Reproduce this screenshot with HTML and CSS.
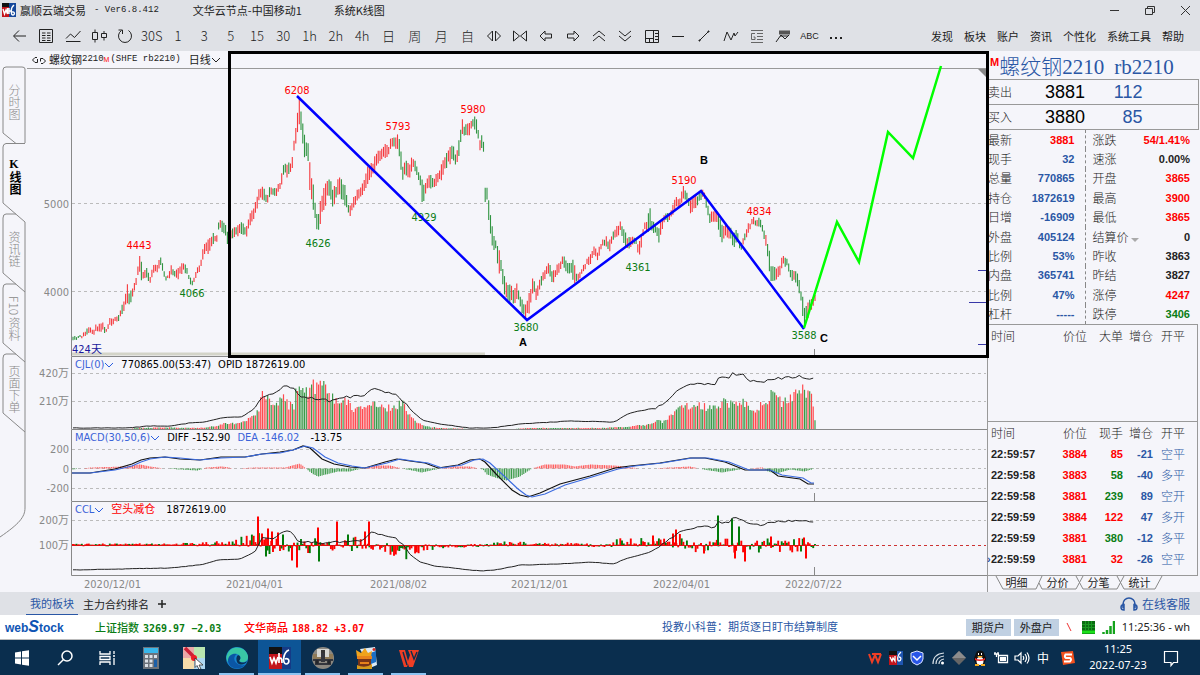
FILE: index.html
```html
<!DOCTYPE html>
<html lang="zh-CN">
<head>
<meta charset="utf-8">
<title>赢顺云端交易</title>
<link rel="stylesheet" href="styles.css">
</head>
<body>
<div class="app">
  <header class="titlebar">
    <svg class="app-logo" viewBox="0 0 14 14"><rect width="7" height="14" fill="#c3141b"/><rect width="7" height="4" fill="#111"/><rect x="7" width="7" height="14" fill="#15479a"/><path d="M1 6l1.500 5L4 7l1.500 4V5M7 5v6M7 8h2M12 2C8 5 9 12 11 12s2-4-1-3" fill="none" stroke="#fff" stroke-width="1.400"/></svg>
    <span class="app-name">赢顺云端交易</span>
    <span class="app-version">- Ver6.8.412</span>
    <span class="app-node">文华云节点-中国移动1</span>
    <span class="app-view">系统K线图</span>
    <div class="window-buttons">
      <button aria-label="最小化"><svg viewBox="0 0 12 12"><path d="M1 6.500h9"/></svg></button>
      <button aria-label="还原"><svg viewBox="0 0 12 12"><path d="M1.500 4.500h7v6h-7zM3.500 4V2.500h7v6H9"/></svg></button>
      <button aria-label="关闭"><svg viewBox="0 0 12 12"><path d="M2 2l9 9M11 2l-9 9"/></svg></button>
    </div>
  </header>

  <nav class="toolbar">
    <div class="tools">
      <button aria-label="返回"><svg viewBox="0 0 16 16"><path d="M14 8H2M7 2.500L1.500 8 7 13.500"/></svg></button>
      <button aria-label="报价"><svg viewBox="0 0 16 16"><path d="M1.500 1.500h13v13h-13zM4 5h3.500M9 5h3.500M4 7.500h3.500M9 7.500h3.500M4 10h3.500M9 10h3.500M4 12.500h3.500M9 12.500h3.500"/></svg></button>
      <button aria-label="分时"><svg viewBox="0 0 16 16"><path d="M1 10.500L5.500 6l4 3.500L15.500 3M1 13.500h14.500"/></svg></button>
      <button aria-label="K线"><svg viewBox="0 0 16 16"><path d="M1.500 4.500h5v7h-5zM4 1.500v3M4 11.500v3M10.500 5.500h5v4h-5zM13 3v2.500M13 9.500v3"/></svg></button>
      <button aria-label="刷新"><svg viewBox="0 0 16 16"><path d="M4.500 2.500A6.500 6.500 0 1 0 11.500 2.500M1.500 2h4v4"/></svg></button>
      <button>30S</button><button>1</button><button>3</button><button>5</button><button>15</button><button>30</button><button>1h</button><button>2h</button><button>4h</button><button>日</button><button>周</button><button>月</button><button>自</button>
      <button aria-label="展开"><svg viewBox="0 0 16 16"><path d="M6.500 3v10L1.500 8zM9.500 3v10l5-5z"/></svg></button>
      <button aria-label="收缩"><svg viewBox="0 0 16 16"><path d="M1.500 3v10l6-5zM14.500 3v10l-6-5z"/></svg></button>
      <button aria-label="左移"><svg viewBox="0 0 16 16"><path d="M7 3L2 8l5 5v-3h6.500V6H7z"/></svg></button>
      <button aria-label="右移"><svg viewBox="0 0 16 16"><path d="M9 3l5 5-5 5v-3H2.500V6H9z"/></svg></button>
      <button aria-label="放大"><svg viewBox="0 0 16 16"><path d="M2 8l6-5 6 5M2 13l6-5 6 5"/></svg></button>
      <button aria-label="缩小"><svg viewBox="0 0 16 16"><path d="M2 3l6 5 6-5M2 8l6 5 6-5"/></svg></button>
      <button aria-label="版面"><svg viewBox="0 0 16 16"><path d="M1.500 2.500h13v12h-13zM9.500 2.500v12M1.500 10.500h8M5.500 10.500v4M11 5.500h3M11 8.500h3M11 11.500h3"/></svg></button>
      <button aria-label="水平线"><svg viewBox="0 0 16 16"><path d="M2 8.500h12"/></svg></button>
      <button aria-label="线段"><svg viewBox="0 0 16 16"><path d="M3 13l10-10"/><path d="M3 12h1v1H3zM12 3h1v1h-1z"/></svg></button>
      <button aria-label="波浪"><svg viewBox="0 0 16 16"><path d="M1 13l3-9 4 8 3-7 1 3 3-4"/></svg></button>
      <button aria-label="斐波那契"><svg viewBox="0 0 16 16"><path d="M2 2.500h12M8 5.500h6M8 8.500h6M8 11.500h6M2 14.500h12M6 5.500H2.500v6H6V9H4.500" stroke="#666"/></svg></button>
      <button aria-label="通道"><svg viewBox="0 0 16 16"><path d="M4 3.500h11M4 5.500h11" stroke="#555" stroke-width="2"/><path d="M1 14l5-7 4 4 4-4M5 8h8"/></svg></button>
      <button class="abc">ABC</button>
      <button aria-label="更多"><svg viewBox="0 0 16 16"><path d="M2 10h2M7 10h2M12 10h2" stroke-width="2"/></svg></button>
    </div>
    <div class="menu"><button>发现</button><button>板块</button><button>账户</button><button>资讯</button><button>个性化</button><button>系统工具</button><button>帮助</button></div>
  </nav>

  <main class="workspace">
    <nav class="side-tabs">
      <svg class="side-outline" viewBox="0 0 27 541"><path d="M25 92V18Q25 16 22 16H6Q3 16 3 19V82L16 92.500H25M16 92.500H6Q3 93 3 96V152L25 171V241M16 163H6Q3 163 3 167V222L25 241V311M16 233H6Q3 233 3 237V292L25 311V381M16 303H6Q3 303 3 307V362L25 381V457C25 466 19 473 0 486"/></svg>
      <button>分时图</button>
      <button class="active">K线图</button>
      <button>资讯链</button>
      <button>F10 资料</button>
      <button>页面下单</button>
    </nav>

    <section class="charts">
      <div class="chart-head">
        <svg viewBox="0 0 16 10"><path d="M6 2.500H4L1.500 5 4 7.500h2.500V4M9.500 6.500v-3H12L14.500 6 12 8.500h-2"/></svg>
        <span>螺纹钢</span><span class="code">2210</span><sup>M</sup><span class="code market">(SHFE rb2210)</span>
        <button class="period">日线<svg viewBox="0 0 10 8"><path d="M1 2l4 4 4-4"/></svg></button>
      </div>
      <svg id="price" class="plot price" viewBox="27 68 960 289"></svg>
      <div class="pane">
        <div class="pane-head"><button>CJL(0)<svg viewBox="0 0 10 8"><path d="M1 2l4 4 4-4"/></svg></button><span>770865.00(53:47)</span><span>OPID 1872619.00</span></div>
        <svg id="volume" class="plot" viewBox="27 357 960 73"></svg>
      </div>
      <div class="pane">
        <div class="pane-head"><button>MACD(30,50,6)<svg viewBox="0 0 10 8"><path d="M1 2l4 4 4-4"/></svg></button><span>DIFF -152.90</span><span class="dea">DEA -146.02</span><span class="hist">-13.75</span></div>
        <svg id="macd" class="plot" viewBox="27 430 960 72"></svg>
      </div>
      <div class="pane">
        <div class="pane-head"><button>CCL<svg viewBox="0 0 10 8"><path d="M1 2l4 4 4-4"/></svg></button><span class="signal">空头减仓</span><span class="interest">1872619.00</span></div>
        <svg id="interest" class="plot" viewBox="27 502 960 74"></svg>
      </div>
      <svg id="dates" class="plot" viewBox="27 576 960 16"></svg>
    </section>

    <aside class="quote">
      <h1><sup>M</sup><span>螺纹钢2210</span><span>rb2210</span></h1>
      <table class="book">
        <tr><th>卖出</th><td>3881</td><td class="blue">112</td></tr>
        <tr><th>买入</th><td>3880</td><td class="blue">85</td></tr>
      </table>
      <table class="stats">
        <tr><th>最新</th><td class="red">3881</td><th>涨跌</th><td class="red">54/1.41%</td></tr>
        <tr><th>现手</th><td class="blue">32</td><th>速涨</th><td>0.00%</td></tr>
        <tr><th>总量</th><td class="blue">770865</td><th>开盘</th><td class="red">3865</td></tr>
        <tr><th>持仓</th><td class="blue">1872619</td><th>最高</th><td class="red">3900</td></tr>
        <tr><th>日增</th><td class="blue">-16909</td><th>最低</th><td class="red">3865</td></tr>
        <tr><th>外盘</th><td class="blue">405124</td><th>结算价<i class="caret"></i></th><td>0</td></tr>
        <tr><th>比例</th><td class="blue">53%</td><th>昨收</th><td>3863</td></tr>
        <tr><th>内盘</th><td class="blue">365741</td><th>昨结</th><td>3827</td></tr>
        <tr><th>比例</th><td class="blue">47%</td><th>涨停</th><td class="red">4247</td></tr>
        <tr><th>杠杆</th><td class="blue">-----</td><th>跌停</th><td class="green">3406</td></tr>
      </table>
      <div class="big-orders">
        <table class="ticks"><tr><th>时间</th><th>价位</th><th>大单</th><th>增仓</th><th>开平</th></tr></table>
      </div>
      <div class="trades">
        <table class="ticks">
          <tr><th>时间</th><th>价位</th><th>现手</th><th>增仓</th><th>开平</th></tr>
          <tr><td>22:59:57</td><td class="red">3884</td><td class="red">85</td><td class="blue">-21</td><td>空平</td></tr>
          <tr><td>22:59:58</td><td class="red">3883</td><td class="green">58</td><td class="blue">-40</td><td>多平</td></tr>
          <tr><td>22:59:58</td><td class="red">3881</td><td class="green">239</td><td class="blue">89</td><td>空开</td></tr>
          <tr><td>22:59:59</td><td class="red">3884</td><td class="red">122</td><td class="blue">47</td><td>多开</td></tr>
          <tr><td>22:59:59</td><td class="red">3881</td><td class="green">380</td><td class="blue">-12</td><td>多平</td></tr>
          <tr class="latest"><td>22:59:59</td><td class="red">3881</td><td class="red">32</td><td class="blue">-26</td><td>空平</td></tr>
        </table>
      </div>
      <div class="detail-tabs">
        <svg viewBox="0 0 213 16"><path d="M8 0L15 13H48L54 0M51 7L54 13H88L95 0M88 0L95 13H129L136 0M129 0L136 13H167L174 0"/></svg>
        <button>明细</button><button>分价</button><button>分笔</button><button>统计</button>
      </div>
    </aside>
  </main>

  <nav class="sheet-bar">
    <button class="active">我的板块</button><button>主力合约排名</button>
    <button class="add" aria-label="添加"><svg viewBox="0 0 10 10"><path d="M5 1v8M1 5h8"/></svg></button>
    <a class="support" href="#"><svg viewBox="0 0 18 16"><path d="M3 12V8a6 6 0 0 1 12 0v4M4 8.500c-4 0-4 5.500 0 5.500zM14 8.500c4 0 4 5.500 0 5.500z"/></svg>在线客服</a>
  </nav>

  <footer class="ticker">
    <span class="brand">web<b>S</b>tock</span>
    <span class="index green">上证指数<em>3269.97 −2.03</em></span>
    <span class="index red">文华商品<em>188.82 +3.07</em></span>
    <a class="news" href="#">投教小科普：期货逐日盯市结算制度</a>
    <div class="accounts">
      <button>期货户</button><button>外盘户</button>
      <svg class="slash" viewBox="0 0 8 12"><path d="M2 2l4 8" stroke="#e33"/></svg>
      <svg class="meter" viewBox="0 0 13 13"><rect width="13" height="13" fill="#0b6b12"/><path d="M0 11h13" stroke="#1be01b" stroke-width="3"/><path d="M0 3.500h13M0 6.500h13M3.500 0v9M6.500 0v9M9.500 0v9" stroke="#1a9a22" stroke-width="1"/></svg>
      <svg class="meter" viewBox="0 0 13 13"><path d="M1.500 11v2M5 9v4M8.500 5v8M12 0v13" stroke="#14a31c" stroke-width="2.500"/></svg>
      <time>11:25:36 - wh</time>
    </div>
  </footer>

  <div class="taskbar">
    <button aria-label="开始"><svg viewBox="0 0 22 22"><path d="M4 5.500l6-1V10.500H4zM11 4.300l7-1v7.200h-7zM4 11.500h6v6l-6-1zM11 11.500h7v7.200l-7-1z" fill="#fff"/></svg></button>
    <button aria-label="搜索"><svg viewBox="0 0 22 22"><circle cx="13" cy="9" r="5" fill="none" stroke="#fff" stroke-width="1.500"/><path d="M9.500 12.500L4 18" stroke="#fff" stroke-width="1.500"/></svg></button>
    <button aria-label="任务视图"><svg viewBox="0 0 22 22"><path d="M3 4v3h10V4M3 18v-3h10v3M3 9.500h10v3H3zM17 4v3M17 11v7M16 9h2" fill="none" stroke="#fff" stroke-width="1.300"/></svg></button>
    <button aria-label="计算器"><svg viewBox="0 0 22 22"><rect x="3" width="16" height="22" fill="#6c737b"/><rect x="4" y="1" width="14" height="5" fill="#39b7ea"/><g fill="#dce2e8"><path d="M5 8h3v3H5zM9.500 8h3v3h-3zM14 8h3v3h-3zM5 12.500h3v3H5zM9.500 12.500h3v3h-3zM5 17h3v3H5zM9.500 17h3v3h-3z"/></g><path d="M14 12.500h3V20h-3z" fill="#1a5fa8"/></svg></button>
    <button aria-label="截图"><svg viewBox="0 0 22 22"><path d="M0 0h11v11H0z" fill="#eaa8a8"/><path d="M11 0h11v11H11z" fill="#b9e6b0"/><path d="M0 11h11v11H0z" fill="#f5dcaa"/><path d="M11 11h11v11H11z" fill="#aed8f2"/><path d="M2 1l9 9" stroke="#c92238" stroke-width="3.500"/><circle cx="11" cy="11" r="3" fill="#ee1c25"/><path d="M12 11l8 7h-4l2 4-2 .5-2-4-2 2z" fill="#fff" stroke="#333" stroke-width=".8"/></svg></button>
    <button class="open" aria-label="浏览器"><svg viewBox="0 0 22 22"><circle cx="11" cy="11" r="11" fill="#1683cf"/><path d="M1 8C4-2 19-2 22 9c1 7-7 7-9 5 3-3 1-7-3-7C5 7 2 11 2 15 0 12 0 10 1 8z" fill="#39c6a5"/><path d="M2 14c0-6 5-8 9-7-4 2-4 9 3 11 3 1 5 0 6-1-4 6-16 7-18-3z" fill="#0b56a5"/><path d="M12 8c3 1 3 4 1 6 3 3 7 1 8 0-1 4-8 5-10 1-1-3-1-5 1-7z" fill="#0a3054"/></svg></button>
    <button class="open current" aria-label="赢顺"><svg viewBox="0 0 22 22"><path d="M0 0h14v22H0z" fill="#c3141b"/><path d="M0 0h14v7H0z" fill="#111"/><path d="M13 0h9v22h-9z" fill="#153a86"/><path d="M1 10l2 6 2-5 2 5 2-6M10 6v10M10 12q3-3 3 4M20 3c-6 2-7 14-3 14s4-7-1-5" fill="none" stroke="#fff" stroke-width="1.700"/></svg></button>
    <button class="open" aria-label="相册"><svg viewBox="0 0 22 22"><circle cx="11" cy="11" r="11" fill="#8c8880"/><path d="M1 7h20v7H1z" fill="#8f7b58"/><path d="M5 2h12v8H5z" fill="#d6d6d2"/><path d="M1 12h20v2H1zM3 16h16v2H3zM9 6h4v9H9z" fill="#34363d"/><path d="M9 3h4v3H9z" fill="#333"/><circle cx="5" cy="15" r="2" fill="#24262b"/><circle cx="17" cy="15" r="2" fill="#24262b"/></svg></button>
    <button class="open" aria-label="游戏"><svg viewBox="0 0 22 22"><path d="M5 2L20 0l2 18-7 3z" fill="#dceaf7"/><path d="M15 6l6-2v11l-5 2z" fill="#1c6fc4"/><path d="M19 1v3M17.500 2.500h3" stroke="#d72a1c" stroke-width="1.500"/><path d="M1 3l5 3 4-5 3 5 4-2-1 6H2z" fill="#f0a31c"/><path d="M3 10h13v8c-5 5-10 3-13 0z" fill="#7a3417"/><path d="M2 9h15v3H2zM5 15h9v2H5z" fill="#e8821b"/><path d="M2 18q8 4 15-1v5H2z" fill="#d79a1c"/></svg></button>
    <button class="open" aria-label="WPS"><svg viewBox="0 0 22 22"><path d="M1 3h6l3 11 2-6-2-5h11l-6 17h-4l-1-3-1 3H6z" fill="#ef3e25"/><path d="M5 5l4 13M13 4l3 8 3-7" stroke="#0a2e4e" fill="none" stroke-width="1.400"/></svg></button>
    <div class="tray">
      <svg viewBox="0 0 16 16"><path d="M2 4l3 8 3-7 3 7 3-8M5 4h9" fill="none" stroke="#ef3e25" stroke-width="2"/></svg>
      <svg viewBox="0 0 16 16"><path d="M1 1h8v14H1z" fill="#c3141b"/><path d="M1 1h8v4H1z" fill="#111"/><path d="M9 1h6v14H9z" fill="#1f55b0"/><path d="M2 7l2 4 1-3 2 3V6M13 2c-4 3-4 9-2 9s3-4 0-4" fill="none" stroke="#fff" stroke-width="1.300"/></svg>
      <svg viewBox="0 0 16 16"><path d="M8 1l6 2v6q0 4-6 6-6-2-6-6V3z" fill="#2856e8" stroke="#dfe7ff"/><path d="M4 6l4 4 4-4" fill="none" stroke="#fff" stroke-width="1.500"/></svg>
      <svg viewBox="0 0 16 16"><path d="M3 14Q3 4 14 3M6 14q0-7 8-8M9 14q0-4 5-5" fill="none" stroke="#d6dee5" stroke-width="1.200"/><circle cx="12.500" cy="13" r="1.500" fill="#fff"/></svg>
      <svg viewBox="0 0 16 16"><path d="M8 1l7 7-7 7-7-7z" fill="#666"/><path d="M8 1l7 7H1z" fill="#8c8c8c"/></svg>
      <svg viewBox="0 0 16 16"><ellipse cx="8" cy="9" rx="6" ry="6" fill="#111"/><circle cx="8" cy="5" r="4.500" fill="#111"/><ellipse cx="8" cy="11" rx="3.500" ry="4" fill="#fff"/><path d="M3 8q5 3 10 0v2q-5 2-10 0z" fill="#e22"/><path d="M6 4h1M9 4h1" stroke="#fff" stroke-width="2"/><path d="M5 6h6l-3 2zM3 14h4v2H3zM9 14h4v2H9z" fill="#f5a81c"/></svg>
      <svg viewBox="0 0 16 16"><path d="M5.500 5.500h9v7h-9zM1 4h5M2 2v2M5 2v2M3.500 4v3" fill="none" stroke="#fff" stroke-width="1.300"/><path d="M7 7h6v4H7z" fill="#fff"/></svg>
      <svg viewBox="0 0 16 16"><path d="M1 6h3l3-3v10L4 10H1zM9 6q1.500 2 0 4M11 4q3 4 0 8M13 2.500q4 5.500 0 11" fill="none" stroke="#fff" stroke-width="1.200"/></svg>
      <span class="ime">中</span>
      <svg viewBox="0 0 16 16"><path d="M1 2l12-1 2 12-12 2z" fill="#f4511e"/><path d="M12 4.500H5.500Q4 7 6 8h4q2 1 0 3.500H4" fill="none" stroke="#fff" stroke-width="2"/></svg>
    </div>
    <div class="clock"><span>11:25</span><span>2022-07-23</span></div>
    <button class="notice" aria-label="通知"><svg viewBox="0 0 22 22"><path d="M4.500 4.500h13v11h-4l-2.500 3v-3h-6.500z" fill="none" stroke="#fff" stroke-width="1.200"/></svg></button>
  </div>
</div>
<script src="chart.js"></script>
</body>
</html>
```

FILE: styles.css
```css
* { box-sizing: border-box; }
body {
  margin: 0;
  background: #f5f5fa;
  color: #222;
  font: 11px/16px "DejaVu Sans Condensed", "Noto Sans", "Noto Sans CJK SC", sans-serif;
}
button {
  border: 0;
  padding: 0;
  background: none;
  color: inherit;
  font: inherit;
  white-space: nowrap;
}
a { color: inherit; text-decoration: none; }
table { border-collapse: collapse; width: 100%; }
th, td { padding: 0; }
.red { color: #f00; }
.green { color: #0a7d14; }
.blue { color: #2a57a5; }
.app { display: flex; flex-direction: column; min-height: 100vh; }

.titlebar {
  display: flex;
  align-items: center;
  height: 20px;
  background: #dfe1e6;
  font: 11px/20px "Noto Sans CJK SC", sans-serif;
}
.app-logo { width: 14px; height: 14px; margin: 0 4px 0 2px; }
.app-version { margin-left: 8px; font: 9px/20px "Liberation Mono", monospace; white-space: pre; }
.app-node { margin-left: 34px; }
.app-view { margin-left: 32px; }
.window-buttons { display: flex; gap: 23px; margin-left: auto; padding-right: 9px; }
.window-buttons button { display: flex; }
.window-buttons svg { width: 12px; height: 12px; fill: none; stroke: #333; }

.toolbar {
  display: flex;
  align-items: center;
  height: 31px;
  background: #dfe1e6;
}
.tools { display: flex; flex: 1; padding: 0 82px 0 7px; }
.tools button {
  display: flex;
  flex: 1 1 0;
  min-width: 0;
  height: 20px;
  align-items: center;
  justify-content: center;
  font: 300 13px/20px "Noto Sans CJK SC", sans-serif;
}
.tools svg { flex: none; width: 16px; height: 16px; fill: none; stroke: #222; }
.tools .abc { font: 9px/20px "Liberation Sans", sans-serif; }
.menu { display: flex; gap: 11px; padding-right: 16px; }
.menu button { font: 11px/18px "Noto Sans CJK SC", sans-serif; }

.workspace { display: flex; flex: 1; align-items: stretch; }
.side-tabs {
  position: relative;
  display: flex;
  flex: none;
  flex-direction: column;
  width: 27px;
  padding-top: 16px;
}
.side-outline {
  position: absolute;
  top: 0;
  left: 0;
  width: 27px;
  height: 541px;
  fill: none;
  stroke: #888;
}
.side-tabs button {
  position: relative;
  width: 28px;
  height: 70px;
  color: #888;
  font: 300 12px/28px "Noto Sans CJK SC", sans-serif;
  writing-mode: vertical-rl;
}
.side-tabs .active {
  height: 77px;
  color: #000;
  font: 700 12px/28px "Liberation Serif", "Noto Sans CJK SC", serif;
  text-orientation: upright;
}

.charts { flex: 1; min-width: 0; }
.chart-head {
  display: flex;
  align-items: center;
  height: 17px;
  padding-left: 4px;
  font: 11px/17px "Noto Sans CJK SC", sans-serif;
}
.chart-head svg { width: 16px; height: 10px; margin-right: 2px; fill: none; stroke: #222; }
.chart-head sup { color: #f00; font: 7px/8px "Liberation Sans", sans-serif; }
.chart-head .code { font: 9px/17px "Liberation Mono", monospace; }
.chart-head .market { margin-left: 1px; }
.period { display: flex; align-items: center; margin-left: 8px; }
.chart-head .period svg { width: 10px; height: 8px; margin: 0; }
.plot { display: block; width: 100%; height: auto; }
.price { position: relative; z-index: 2; overflow: visible; pointer-events: none; }
.plot text { fill: #888; }
.plot .peak { fill: #f00; text-anchor: middle; }
.plot .trough { fill: #0a7d14; text-anchor: middle; }
.plot .letter { fill: #000; font: bold 11px "Liberation Sans", sans-serif; text-anchor: middle; }
.plot .span { fill: #1a1a9c; }
.pane { position: relative; }
.pane-head {
  position: absolute;
  top: 0;
  left: 48px;
  display: flex;
  gap: 7px;
}
.pane-head button { color: #3b63d8; }
.pane-head span { color: #000; }
.pane-head .dea { color: #3b63d8; }
.pane-head .signal { color: #f00; }
.pane-head .hist, .pane-head .interest { margin-left: 4px; }
.pane-head svg { width: 10px; height: 8px; fill: none; stroke: #2b5fe0; vertical-align: middle; }

.quote {
  display: flex;
  flex: none;
  flex-direction: column;
  width: 213px;
  border-left: 1px solid #999;
}
.quote h1 {
  display: flex;
  gap: 10px;
  height: 28px;
  margin: 0;
  padding-left: 2px;
  color: #2a57a5;
  font: 300 21px/32px "Liberation Serif", "Noto Sans CJK SC", serif;
  white-space: nowrap;
}
.quote h1 sup { margin-right: -10px; color: #f00; font: bold 11px/22px "Liberation Sans", sans-serif; }
.quote table { table-layout: fixed; }
.quote th {
  font: 300 12px/18px "Noto Sans CJK SC", sans-serif;
  text-align: left;
  white-space: nowrap;
}
.quote td { font: bold 11px/18px "Liberation Sans", sans-serif; text-align: right; }
.quote .book, .quote .stats { width: 210px; }
.book tr { height: 25px; border: 1px solid #999; border-left: 0; }
.book th { width: 52px; }
.quote .book td { width: 45px; color: #000; font: 18px/24px "Liberation Sans", sans-serif; }
.quote .book td.blue { width: 113px; padding-right: 55px; color: #2a57a5; }
.stats { height: 194px; }
.stats th:first-child { width: 36px; }
.stats td:nth-child(2) { width: 61px; padding-right: 10px; border-right: 1px dashed #888; }
.stats th:nth-child(3) { width: 55px; padding-left: 7px; }
.stats td:last-child { padding-right: 8px; }
.caret { display: inline-block; margin-left: 2px; border: 4px solid transparent; border-top-color: #aaa; border-bottom: 0; }
.big-orders { height: 97px; border-top: 1px solid #999; border-right: 1px solid #999; margin-right: 2px; }
.trades { flex: 1; border: 1px solid #999; border-width: 1px 1px 1px 0; margin-right: 2px; }
.ticks tr { height: 21px; }
.ticks th, .ticks td { text-align: right; }
.ticks th:first-child, .ticks td:first-child { width: 52px; padding-left: 3px; text-align: left; }
.ticks th:nth-child(2) { width: 47px; }
.ticks th:nth-child(3) { width: 36px; }
.ticks th:nth-child(4) { width: 30px; }
.ticks th:nth-child(5), .ticks td:nth-child(5) { padding-right: 12px; }
.quote .ticks td:nth-child(5) { color: #2a57a5; font: 300 12px/18px "Noto Sans CJK SC", sans-serif; }
.latest td:first-child { position: relative; }
.latest td:first-child::before { content: "›"; position: absolute; left: -1px; color: #2a57a5; }
.detail-tabs { position: relative; display: flex; height: 16px; padding-left: 8px; }
.detail-tabs svg { position: absolute; top: 0; left: 0; width: 213px; height: 16px; fill: none; stroke: #888; }
.detail-tabs button { position: relative; width: 41px; height: 12px; font: 11px/12px "Noto Sans CJK SC", sans-serif; }

.sheet-bar {
  display: flex;
  height: 23px;
  padding: 0 10px 0 26px;
  background: #dfe1e6;
  font: 11px/22px "Noto Sans CJK SC", sans-serif;
}
.sheet-bar button { margin-right: 5px; }
.sheet-bar .active { width: 52px; border-bottom: 1px solid #2a57a5; color: #2a57a5; }
.sheet-bar .add { display: flex; align-items: center; margin-left: 3px; }
.add svg { width: 10px; height: 10px; stroke: #222; stroke-width: 1.5; }
.support { display: flex; align-items: center; gap: 4px; margin-left: auto; color: #2a57a5; font-size: 12px; }
.support svg { width: 18px; height: 16px; fill: none; stroke: #2a57a5; stroke-width: 1.5; }

.ticker {
  display: flex;
  align-items: center;
  height: 25px;
  padding-left: 5px;
  background: #fff;
  border-bottom: 1px solid #bbb;
  font: 11px/24px "Noto Sans CJK SC", sans-serif;
  white-space: nowrap;
}
.brand { width: 90px; color: #0f55b4; font: bold 12px/24px "Liberation Sans", sans-serif; }
.brand b { font-size: 16px; font-style: italic; }
.index { width: 149px; font-weight: 500; }
.index em { margin-left: 4px; font: bold 10px "DejaVu Sans Mono", monospace; }
.news { margin: 0 auto 3px 269px; color: #2a57a5; }
.accounts { display: flex; align-items: center; padding-right: 10px; }
.accounts button { width: 45px; height: 17px; margin-right: 3px; background: #c0d0e2; font: 11px/16px "Noto Sans CJK SC", sans-serif; }
.slash { width: 8px; height: 12px; margin: 0 9px 0 3px; }
.meter { width: 13px; height: 13px; margin-right: 7px; }
.accounts time { font: 11px/24px "Noto Sans", sans-serif; }

.taskbar { display: flex; flex: none; height: 35px; background: #0a2e4e; color: #fff; }
.taskbar > button { display: flex; width: 43px; align-items: center; justify-content: center; background: no-repeat bottom / 35px 2px; }
.taskbar > button svg { width: 22px; height: 22px; }
.taskbar > .open { background-image: linear-gradient(#8cc4f2, #8cc4f2); }
.taskbar > .current { background-color: #0d5596; background-size: 43px 2px; }
.tray { display: flex; gap: 5px; align-items: center; margin-left: auto; }
.tray svg { width: 16px; height: 16px; }
.ime { width: 16px; margin-right: 4px; font: 12px/16px "Noto Sans CJK SC", sans-serif; text-align: center; }
.clock { display: flex; flex-direction: column; width: 84px; padding-top: 1px; font: 11px/16px "Noto Sans", sans-serif; text-align: center; }
.taskbar > .notice { width: 22px; margin-right: 18px; }
```

FILE: chart.js
```js
const RED = '#f5383c', GREEN = '#2f9440';
const FIRST = 73, LAST = 815, DAYS = 424;
const STEP = (LAST - FIRST) / (DAYS - 1);

let seed = 11;
const rand = () => (seed = (seed * 16807) % 2147483647) / 2147483647;
const parse = s => s.trim().split(/\s+/).map(p => p.split(',').map(Number));

// Linear interpolation of column c at position x.
function at(points, x, c = 1) {
  let i = 1;
  while (i < points.length - 1 && points[i][0] < x) i++;
  const a = points[i - 1], b = points[i];
  const t = Math.max(0, Math.min(1, (x - a[0]) / (b[0] - a[0])));
  return a[c] + (b[c] - a[c]) * t;
}
const days = (fn, every = 1) => Array.from({ length: Math.floor(DAYS / every) }, (_, i) => fn(FIRST + i * every * STEP, i)).join('');
const bar = (x, y1, y2, color, w = 1.3) => `<path d="M${x.toFixed(1)} ${y1.toFixed(1)}V${y2.toFixed(1)}" stroke="${color}" stroke-width="${w}"/>`;
const line = (pts, color, w = 1, dx = 0) => `<polyline fill="none" stroke="${color}" stroke-width="${w}" points="${pts.map(p => (p[0] + dx) + ',' + p[1]).join(' ')}"/>`;
const grid = (y, color = '#bbb') => `<path d="M72 ${y}H986" stroke="${color}" stroke-dasharray="3 3"/>`;
const label = (x, y, s, cls = '') => `<text x="${x}" y="${y}" class="${cls}">${s}</text>`;
const axis = (y, s) => `<text x="69" y="${y + 4}" text-anchor="end">${s}</text>`;
const frame = (top, bottom) => `<path d="M71.5 ${top}V${bottom - 0.5}H987" fill="none" stroke="#888"/>`;
// Daily wobble added between the anchor points of a smooth line.
const rough = (pts, amp) => Array.from({ length: DAYS / 2 }, (_, i) => {
  const x = FIRST + i * 2 * STEP;
  const k = (x > 262 && x < 412) || x > 655 ? amp : amp / 5;
  return [+x.toFixed(1), +(at(pts, x) + (rand() - 0.5) * k).toFixed(1)];
});

const price = parse(`73,340,2 80,337,1 84,335,2 88,331,3 93,332,3 98,327,3 102,326,4 106,330,2 110,321,3 118,320,3 121,312,4 125,302,4 127,292,11 129,299,7 133,293,3 137,277,4 139.5,262,10 141,270,9 143,277,5 146,272,5 150,280,3 154,268,5 157,268,4 161,262,4 164,274,4 167,279,1 171,270,5 176,274,4 179,272,5 184,266,4 188,274,3 192,284,3 196,275,3 201,264,3 204,250,6 208,246,6 213,238,5 217,237,3 219,222,6 222,226,6 226,232,8 228,241,4 232,232,5 238,232,5 242,227,5 246,232,5 250,218,6 254,214,6 259,195,6 263,193,6 267,199,5 271,190,4 276,193,6 280,185,3 284,169,7 288,170,6 292,164,5 294,146,6 297,128,15 298.5,109,13 300,110,12 302,130,12 305,148,9 308,152,8 310,180,12 314,202,12 316,218,4 318,225,10 321,208,10 324,199,12 327,190,8 330,188,10 333,200,10 336,192,6 339,184,7 342,190,9 345,194,9 349,213,5 353,204,5 357,196,5 361,192,5 365,185,8 369,172,8 372,170,8 376,160,5 380,155,7 384,150,7 388,152,5 392,141,5 396,144,7 398,139,6 401,160,12 403,176,7 405,165,7 409,173,6 413,162,6 417,170,4 420,180,6 423,195,12 425,190,5 429,180,6 433,184,6 437,178,5 441,173,7 445,163,6 449,156,7 453,150,8 456,163,7 459,147,9 462,126,7 464,131,6 468,130,6 471,126,5 474,121,5 477,128,7 480,145,6 483.4,141,6 484,193,7 487,195,7 490,220,13 493,243,9 496,245,5 498,258,12 501,265,8 504,283,10 506,291,8 510,292,8 514,298,10 517,290,7 520,300,6 523,308,7 525,313,5 527,308,9 530,300,10 533,283,7 536,293,5 539,287,6 542,278,5 545,273,4 548,267,5 552,276,5 555,274,5 559,268,4 563,260,5 567,269,5 571,268,4 573.5,269,13 577,280,3 582,272,3 586,264,3 591,257,5 594,252,6 598,256,5 602,243,3 606,242,5 610,246,5 614,234,5 618,230,6 621,226,6 624,238,7 628,245,5 633,240,5 636,242,3 639,251,7 642,240,5 644,228,4 647,225,6 650,219,11 652,226,6 656,228,4 659,236,7 662,224,5 665,217,4 669,218,4 673,210,5 676,203,4 680,203,5 682,195,6 684,192,5 687,198,5 691,208,7 694,203,7 698,199,5 702,194,5 704,195,4 707,204,5 709,218,6 713,216,6 716,214,6 719,222,7 722,234,8 726,230,7 730,232,7 733,240,6 737,236,6 741,248,4 745,237,5 748,229,4 752,222,3 757,222,4 760,222,4 764,233,5 767,246,5 769,258,9 771,273,9 775,275,7 779,272,5 783,260,5 787,262,5 791,275,5 795,274,6 798,282,10 801,296,5 804,315,12 807,312,8 810,305,4 813,303,5 815,299,4`);

let rising = false;
const candles = days(x => {
  const mid = at(price, x) + (rand() - 0.5) * 3;
  const half = Math.max(1, at(price, x, 2) * (0.65 + rand() * 0.55));
  const slope = at(price, x + 2) - at(price, x - 2);
  if (Math.abs(slope) > 2) rising = slope < 0;
  const up = rand() < 0.15 ? !rising : rising;
  return bar(x, mid - half, mid + half, up ? RED : GREEN, 1.1);
});

document.getElementById('price').innerHTML =
  '<path d="M27 68.5H987" stroke="#999"/>' + frame(68, 357) +
  '<path d="M72 354H485" stroke="#d3d4c8" stroke-width="3"/>' +
  '<path d="M978 69h9v9z" fill="#888"/><path d="M978 270.500h8M969 302.500h17M978 344.500h8" stroke="#3838a8"/>' +
  '<path d="M814.500 349v7" stroke="#888"/>' +
  grid(203.5) + grid(291.5) + axis(204, '5000') + axis(292, '4000') + candles +
  label(139, 249, '4443', 'peak') + label(192, 297, '4066', 'trough') +
  label(297, 94, '6208', 'peak') + label(318, 247, '4626', 'trough') +
  label(398, 130, '5793', 'peak') + label(424, 221, '4929', 'trough') +
  label(473, 113, '5980', 'peak') + label(526, 331, '3680', 'trough') +
  label(638, 271, '4361', 'trough') + label(684, 184, '5190', 'peak') +
  label(759, 215, '4834', 'peak') + label(804, 339, '3588', 'trough') +
  label(72, 353, '424天', 'span') +
  label(523, 346, 'A', 'letter') + label(704, 164, 'B', 'letter') + label(824, 342, 'C', 'letter') +
  line(parse('297,96 527,320 701,191 804,329'), '#00f', 2.5) +
  line(parse('804,328 837,222 859,262 888,132 913,158 941,66'), '#0f0', 2.5) +
  '<rect x="229.500" y="52.500" width="758" height="304" fill="none" stroke="#000" stroke-width="3"/>';

const volume = parse(`73,0 130,0 135,1 170,1.5 200,1 215,3 222,5 230,5 240,6 247,9 252,11 258,18 262,32 266,34 270,28 274,30 278,28 283,32 288,24 294,24 297,43 300,46 304,38 308,37 312,42 316,40 320,45 324,42 328,35 332,32 338,27 344,28 350,24 357,19 362,19 368,22 374,24 380,20 386,22 392,19 398,24 403,26 408,17 412,10 416,7 422,4 430,2 440,1 475,0 510,0 530,1 600,1 620,2 630,2 640,4 648,4 655,8 662,7 668,11 674,14 680,22 690,23 708,22 716,25 724,26 738,24 744,28 750,22 755,18 760,24 766,28 770,34 776,32 782,26 790,30 798,34 804,38 810,36 813,28 815,10`);
const openInterest = parse(`72,428 125,428 150,426 170,426 190,423 205,422 220,418 232,417 242,417 254,409 262,397 276,393 285,386 293,388 300,398 310,398 330,401 346,397 364,396 372,389 385,392 396,394 404,402 412,411 422,420 440,424 470,428 492,428 520,424 570,421 614,422 630,413 655,408 670,399 680,388 695,384 715,384 718,377 730,378 733,373 738,376 741,373 750,381 755,380 766,382 770,379 785,378 800,376 805,379 815,379`);
document.getElementById('volume').innerHTML =
  grid(373.5) + grid(401.5) + axis(373, '420万') + axis(401, '210万') +
  days(x => {
    const h = at(volume, x) * (0.8 + rand() * 0.4);
    return h < 0.3 ? '' : bar(x, 429 - h, 429, rand() < 0.5 ? '#ff4a4f' : '#3b9a48', 1.2);
  }) + line(rough(openInterest, 2.5), '#222') + frame(357, 430);

const diff = parse(`72,473 90,473 115,469 132,464 141,460 150,458 165,457 180,459 200,460 221,457 245,457 262,454 280,452 293,450 303,446 310,448 322,459 334,464 350,467 365,468 385,462 397,459 410,461 425,463 438,468 458,465 470,460 480,459 485,462 497,475 512,490 520,495 528,497 540,493 560,484 590,476 615,468 630,466 660,463 690,458 705,458 725,462 745,470 770,470 778,476 800,479 808,484 814,484`);
const dea = parse(`72,473 90,473 115,470 132,466 141,462 150,459 165,457 180,458 200,460 221,458 245,457 262,454 280,453 293,450 305,446 313,448 325,457 338,463 352,466 365,468 387,463 400,459 413,461 428,463 442,468 462,465 474,460 483,459 490,463 503,475 518,489 526,495 532,497 545,494 565,485 592,477 618,469 635,466 662,463 692,458 708,458 729,462 749,470 770,470 782,475 803,478 811,483 814,483`);
const hist = parse(`72,-1 82,0 90,1 125,2 140,4 150,2 165,0 180,-1 198,-2 206,1 222,2 235,0 255,1 285,1 300,5 306,0 312,-5 318,-8 326,-6 338,-3 350,-3 362,0 375,3 390,3 402,0 422,-4 440,0 455,2 470,2 483,-1 487,-6 495,-9 506,-12 520,-8 532,0 545,4 565,4 575,2 590,4 615,3 640,0 650,0 690,2 704,-1 722,-4 745,0 763,1 768,-3 776,-5 790,-1 805,-3 815,0`);
document.getElementById('macd').innerHTML =
  grid(449.5) + grid(468.5) + grid(488.5) + axis(449, '200') + axis(469, '0') + axis(488, '-200') +
  days(x => {
    const h = at(hist, x);
    return Math.abs(h) < 0.4 ? '' : bar(x, 468.5, 468.5 - h, h > 0 ? '#ff5a5a' : '#3b9a48', 1.1);
  }) + line(diff, '#111', 1.2) + line(dea, '#3b6be0', 1.2) +
  '<path d="M814.500 493v8" stroke="#888"/>' + frame(430, 502);

const ccl = parse(`72,570 170,568 190,566 205,564 218,560 240,559 255,552 262,538 276,538 283,531 292,532 298,541 320,543 350,541 364,540 371,532 385,535 396,538 405,547 412,556 420,562 435,566 480,571 495,570 520,565 560,564 590,562 614,564 625,559 650,552 665,543 680,531 700,526 715,528 718,522 729,523 732,517 740,519 750,524 765,525 770,522 800,520 815,523`);
// x, tallest rise, deepest fall of the daily change.
const swing = parse(`73,1,0 190,2,0 235,5,0 243,10,1 255,12,2 266,12,8 280,8,12 300,6,8 325,7,6 345,8,9 365,8,2 378,5,8 400,2,12 415,0,15 425,1,6 440,0,2 480,1,1 500,3,0 515,4,0 530,2,0 610,2,1 618,7,0 650,8,1 675,14,2 684,8,3 695,3,6 710,5,4 720,8,4 740,8,12 752,4,9 768,10,5 780,5,6 800,8,8 815,1,1`);
const spikes = parse('258,29 262,12 268,17 272,14 297,-22 292,-15 266,-11 283,11 278,13 318,18 319,-16 337,24 348,11 369,24 365,14 653,10 676,16 673,12 704,-8 718,30 732,27 739,19 735,-13 745,-16 771,9 806,-13 804,8');
document.getElementById('interest').innerHTML =
  grid(520.5) + grid(545.5, '#c33') + axis(520, '200万') + axis(545, '100万') +
  days(x => {
    const up = at(swing, x, 1), down = at(swing, x, 2);
    const rise = rand() < up / (up + down + 0.1);
    const size = Math.pow(rand(), 1.6);
    const h = rise ? up * size + 0.8 : -down * size - 0.8;
    return bar(x, 545.5, 545.5 - h, rand() < 0.6 ? '#f00' : '#007a08', 1.9);
  }) +
  spikes.map(([x, h]) => bar(x, 545.5, 545.5 - h, [283, 319, 348, 718, 732, 739, 266].includes(x) ? '#007a08' : '#f00', 2)).join('') +
  '<path d="M72 545.500H815" stroke="#d11"/>' +
  line(rough(ccl, 2), '#222') +
  '<path d="M814.500 567v8" stroke="#888"/>' + frame(502, 576);

document.getElementById('dates').innerHTML =
  [[84, '2020/12/01'], [226, '2021/04/01'], [370, '2021/08/02'], [511, '2021/12/01'], [653, '2022/04/01'], [785, '2022/07/22']]
    .map(([x, s]) => label(x, 588, s)).join('');
```
